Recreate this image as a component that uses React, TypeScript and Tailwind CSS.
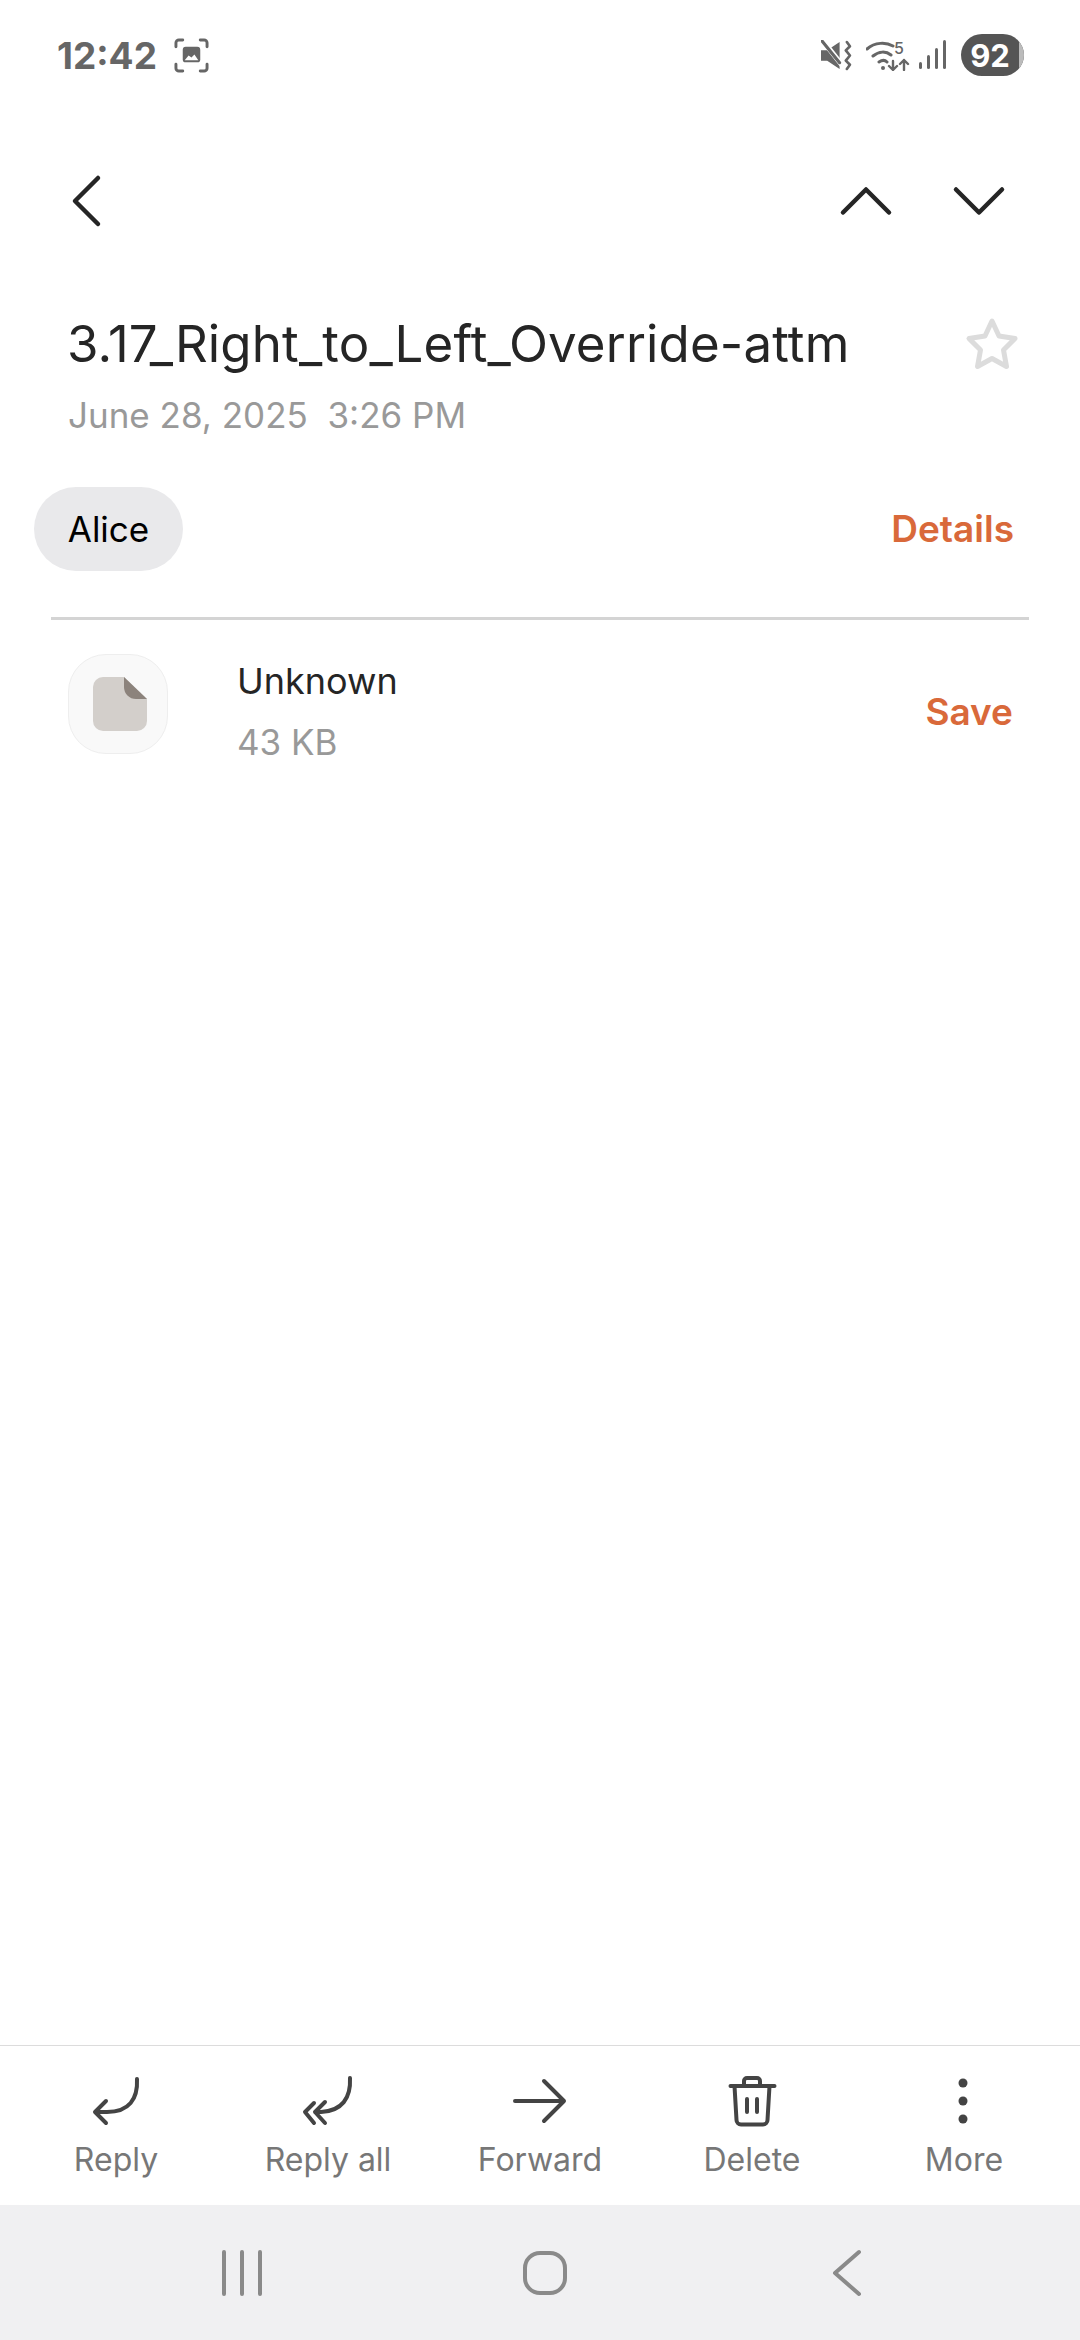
function Chevron({ d, className }: { d: string; className: string }) {
  return (
    <svg viewBox="0 0 56 56" className={className} fill="none" stroke="currentColor" strokeWidth="4.5" strokeLinecap="round" strokeLinejoin="round">
      <path d={d} />
    </svg>
  )
}

function StatusBar() {
  return (
    <div className="h-[110px] flex items-center pl-[57px] pr-[56px] text-[#666]">
      <span className="text-[37px] font-bold leading-none">12:42</span>
      {/* screenshot saved icon */}
      <svg viewBox="0 0 36 36" className="w-[35px] h-[35px] ml-[17px]" fill="none">
        <path d="M2 9V5a3 3 0 0 1 3-3h4M27 2h4a3 3 0 0 1 3 3v4M34 27v4a3 3 0 0 1-3 3h-4M9 34H5a3 3 0 0 1-3-3v-4" stroke="currentColor" strokeWidth="3" strokeLinecap="round" />
        <rect x="9" y="9" width="18" height="16" rx="3" fill="currentColor" />
        <path d="M11 23l4-5 3 2 3-3 4 6z" fill="#fff" />
      </svg>
      <div className="ml-auto flex items-center">
        {/* mute + vibrate */}
        <svg viewBox="0 0 30 30" className="w-[31px] h-[31px]" fill="none">
          <path d="M0 10h6l12-8v26l-12-8H0z" fill="currentColor" />
          <path d="M2 1l19 24" stroke="#fff" strokeWidth="5" />
          <path d="M1 1l17 21" stroke="currentColor" strokeWidth="3" strokeLinecap="round" />
          <path d="M25 2l3 4-4 4 4 5-4 5 4 4-3 4" stroke="currentColor" strokeWidth="2.6" strokeLinecap="round" strokeLinejoin="round" />
        </svg>
        {/* wifi with 5 and arrows */}
        <svg viewBox="0 0 46 32" className="w-[46px] h-[32px] ml-[14px]" fill="none">
          <path d="M1 10c8-7 19-7 26-3M7 17c6-5 13-5 18-1M13 23c3-2 6-2 8 0" stroke="currentColor" strokeWidth="3" strokeLinecap="round" />
          <circle cx="17" cy="29" r="2" fill="currentColor" />
          <path d="M27 22v9m-4-4l4 4 4-4M38 31v-10m-4 4l4-4 4 4" stroke="currentColor" strokeWidth="2.4" strokeLinecap="round" strokeLinejoin="round" />
          <text x="28" y="15" fontSize="16" fontWeight="500" fill="currentColor" fontFamily="Inter, sans-serif">5</text>
        </svg>
        {/* signal */}
        <svg viewBox="0 0 28 30" className="w-[28px] h-[30px] ml-[7px]" fill="currentColor">
          <rect x="0" y="22" width="3" height="7" rx="1.500" />
          <rect x="8" y="15" width="3" height="14" rx="1.500" />
          <rect x="16" y="8" width="3" height="21" rx="1.500" />
          <rect x="24" y="0" width="3" height="29" rx="1.500" />
        </svg>
        <div className="ml-[14px] w-[63px] h-[42px] rounded-[21px] bg-[#555] overflow-hidden flex items-center relative">
          <span className="w-[58px] text-center text-[31px] font-bold leading-none text-white">92</span>
          <div className="absolute right-0 top-0 bottom-0 w-[5px] bg-[#bbb]" />
        </div>
      </div>
    </div>
  )
}

const toolbar = [
  { label: "Reply", icon: <path d="M49 6c1 20-8 33-30 33H8m10-11L7 39l11 11" /> },
  { label: "Reply all", icon: <path d="M50 5c1 20-8 33-29 34h-6m10-10L15 39l10 11M14 30L5 39l9 11" /> },
  { label: "Forward", icon: <path d="M3 28h49M32 8l20 20-20 20" /> },
  {
    label: "Delete",
    icon: <path d="M6.500 13h44M20 13V8a3 3 0 0 1 3-3h10a3 3 0 0 1 3 3v5M10.500 13l2 34a4.500 4.500 0 0 0 4.500 4.500h22a4.500 4.500 0 0 0 4.500-4.500l2-34M23 26v13M33 26v13" />,
  },
]

export default function App() {
  return (
    <div className="w-[1080px] h-[2340px] bg-white flex flex-col font-['Inter',sans-serif] overflow-hidden">
      <StatusBar />

      <div className="h-[182px] flex items-center justify-between pl-[56px] pr-[73px] text-[#252525]">
        <Chevron d="M42 5L19 28l23 23" className="w-[56px] h-[56px]" />
        <div className="flex items-center gap-[57px]">
          <Chevron d="M5 39.500L28 16.500l23 23" className="w-[56px] h-[56px]" />
          <Chevron d="M5 16.500l23 23 23-23" className="w-[56px] h-[56px]" />
        </div>
      </div>

      <div className="mt-[22px] pl-[67px] pr-[60px] flex items-center justify-between">
        <h1 className="text-[51px] leading-[60px] font-normal text-[#252525] tracking-[0.15px] whitespace-nowrap">
          3.17_Right_to_Left_Override-attm
        </h1>
        <svg viewBox="0 0 56 54" className="w-[56px] h-[54px]" fill="none" stroke="#dcdcdc" strokeWidth="5" strokeLinejoin="round">
          <path d="M28 4l7 15 16 2.500-11.500 11.500 3 16.500-14.500-8-14.500 8 3-16.500L5 21.500l16-2.500z" />
        </svg>
      </div>
      <div className="mt-[19px] pl-[68px] text-[35px] leading-[44px] text-[#999] whitespace-pre">June 28, 2025  3:26 PM</div>

      <div className="mt-[50px] pl-[34px] pr-[66px] flex items-center justify-between">
        <div className="h-[84px] w-[149px] rounded-[42px] bg-[#e9e9eb] flex items-center justify-center text-[35px] text-black">Alice</div>
        <span className="text-[37px] font-semibold text-[#d9693a]">Details</span>
      </div>

      <div className="mt-[46px] mx-[51px] h-[3px] bg-[#d4d4d4]" />

      <div className="mt-[34px] pl-[68px] pr-[67px] flex items-start">
        <div className="w-[100px] h-[100px] rounded-[38px] bg-[#f9f9f9] border border-[#eeeeee] flex items-center justify-center">
          <svg viewBox="0 0 54 54" className="w-[54px] h-[54px] ml-[4px]">
            <path d="M10 0h21l23 22v22a10 10 0 0 1-10 10H10A10 10 0 0 1 0 44V10A10 10 0 0 1 10 0z" fill="#d3cfcb" />
            <path d="M31 0l23 22H43a12 12 0 0 1-12-12z" fill="#8c837c" />
          </svg>
        </div>
        <div className="ml-[69px] mt-[5px] flex-1 flex items-center justify-between">
          <div className="flex flex-col">
            <span className="text-[36px] leading-[44px] text-[#252525]">Unknown</span>
            <span className="mt-[17px] text-[35px] leading-[44px] text-[#999]">43 KB</span>
          </div>
          <span className="text-[37px] font-semibold text-[#d9693a]">Save</span>
        </div>
      </div>

      <div className="mt-auto border-t border-[#dcdcdc] h-[160px] px-[10px] grid grid-cols-5 items-start">
        {toolbar.map((item) => (
          <div key={item.label} className="flex flex-col items-center pt-[27px]">
            <svg viewBox="0 0 56 56" className="w-[56px] h-[56px]" fill="none" stroke="#444" strokeWidth="4" strokeLinecap="round" strokeLinejoin="round">
              {item.icon}
            </svg>
            <span className="mt-[11px] text-[32px] leading-[40px] text-[#777]">{item.label}</span>
          </div>
        ))}
        <div className="flex flex-col items-center pt-[27px]">
          <svg viewBox="0 0 56 56" className="w-[56px] h-[56px]" fill="#444">
            <circle cx="27" cy="10" r="4.500" />
            <circle cx="27" cy="28" r="4.500" />
            <circle cx="27" cy="46" r="4.500" />
          </svg>
          <span className="mt-[11px] text-[32px] leading-[40px] text-[#777]">More</span>
        </div>
      </div>

      <div className="h-[135px] bg-[#f0f0f2] pl-[91px] pr-[81px] grid grid-cols-3 items-center justify-items-center">
        <svg viewBox="0 0 48 48" className="w-[48px] h-[48px]" fill="none" stroke="#8a8a8a" strokeWidth="4" strokeLinecap="round">
          <path d="M6 3v42M24 3v42M42 3v42" />
        </svg>
        <svg viewBox="0 0 48 48" className="w-[48px] h-[48px]" fill="none" stroke="#8a8a8a" strokeWidth="4">
          <rect x="4" y="4" width="40" height="40" rx="15" />
        </svg>
        <svg viewBox="0 0 48 48" className="w-[48px] h-[48px]" fill="none" stroke="#8a8a8a" strokeWidth="4" strokeLinecap="round" strokeLinejoin="round">
          <path d="M35 3L11 24l24 21" />
        </svg>
      </div>
    </div>
  )
}
